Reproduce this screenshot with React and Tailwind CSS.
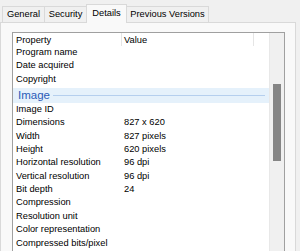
const rowsTop = ["Program name", "Date acquired", "Copyright"];
const rowsImage = [
  ["Image ID", ""],
  ["Dimensions", "827 x 620"],
  ["Width", "827 pixels"],
  ["Height", "620 pixels"],
  ["Horizontal resolution", "96 dpi"],
  ["Vertical resolution", "96 dpi"],
  ["Bit depth", "24"],
  ["Compression", ""],
  ["Resolution unit", ""],
  ["Color representation", ""],
  ["Compressed bits/pixel", ""],
];

function Row({ name, value }) {
  return (
    <div className="flex h-[13.4px] items-center leading-none whitespace-nowrap">
      <div className="w-[109px] pl-[3px]">{name}</div>
      <div className="pl-[2px]">{value}</div>
    </div>
  );
}

function Tab({ label, active, w }) {
  return active ? (
    <div className={`relative z-10 -mb-px flex h-[19px] items-center justify-center border border-b-0 border-[#d9d9d9] bg-[#f9f9f9] ${w}`}>
      {label}
    </div>
  ) : (
    <div className={`flex h-[16px] items-center justify-center border border-b-0 border-[#d9d9d9] bg-[#f0f0f0] ${w}`}>
      {label}
    </div>
  );
}

export default function App() {
  return (
    <div
      className="h-[251px] w-[300px] overflow-hidden bg-[#f0f0f0] text-[9.3px] text-black"
      style={{ fontFamily: '"Liberation Sans", Arial, sans-serif' }}
    >
      <div className="flex h-[22px] items-end pl-[2px]">
        <Tab label="General" w="w-[43px]" />
        <Tab label="Security" w="w-[43px] -ml-px" />
        <Tab label="Details" active w="w-[41px] -ml-px" />
        <Tab label="Previous Versions" w="w-[83px] -ml-px" />
      </div>
      <div className="h-[240px] w-[296px] border border-[#d9d9d9] bg-[#f9f9f9] pl-[11px] pt-[9px]">
        <div className="flex h-[230px] w-[273px] border border-[#a0a0a0] bg-white">
          <div className="w-[256px] overflow-hidden">
            <div className="flex h-[13px] items-start leading-none">
              <div className="flex h-full w-[109px] border-r border-[#e5e5e5] pl-[3px] pt-[3px]">Property</div>
              <div className="flex h-full w-[132px] border-r border-[#e5e5e5] pl-[2px] pt-[3px]">Value</div>
            </div>
            {rowsTop.map((r) => (
              <Row key={r} name={r} value="" />
            ))}
            <div className="mt-[2px] mb-[-0.5px] flex h-[15px] items-center bg-[#e5f1fb] pl-[5px] pr-[4px]">
              <span className="text-[11.5px] leading-none text-[#2a5cb8]">Image</span>
              <div className="ml-[3px] h-px flex-1 bg-[#b5cfee]" />
            </div>
            {rowsImage.map(([n, v]) => (
              <Row key={n} name={n} value={v} />
            ))}
          </div>
          <div className="w-[15px] border-l border-[#e8e8e8] bg-[#f0f0f0] pl-[3px] pt-[51px]">
            <div className="h-[77px] w-[8px] bg-[#858585]" />
          </div>
        </div>
      </div>
    </div>
  );
}
